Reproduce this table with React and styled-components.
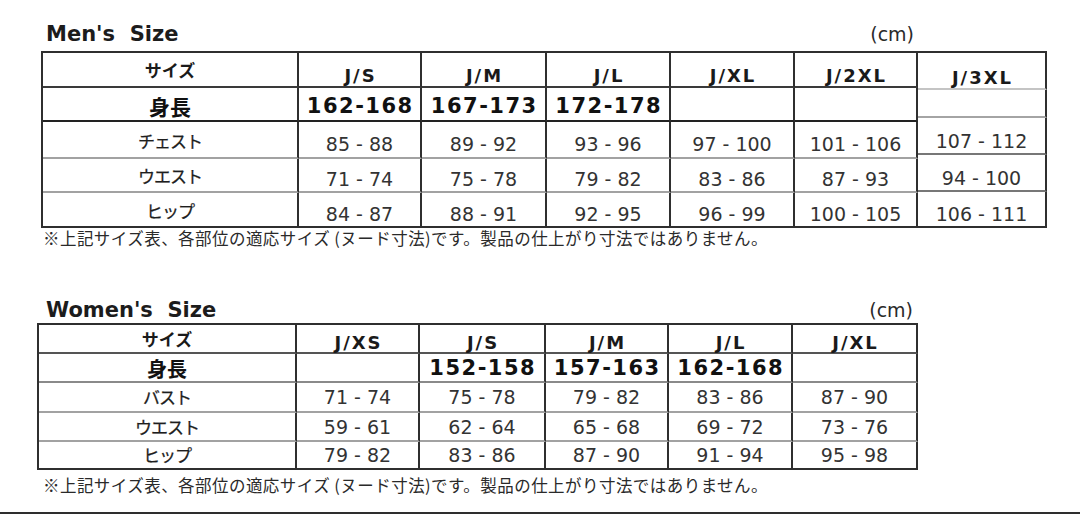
import React from 'react';
import styled, { createGlobalStyle } from 'styled-components';

const JP = `"Noto Sans CJK JP", "Noto Sans", sans-serif`;
const LAT = `"DejaVu Sans", "Noto Sans CJK JP", sans-serif`;
const DARK = '#2f2f2f';
const GRAY = '#a2a2a2';

const GlobalStyle = createGlobalStyle`
  html, body { margin: 0; padding: 0; background: #fff; }
  body { font-family: ${LAT}; color: #222; }
`;

const Page = styled.div`
  width: 1080px;
  height: 514px;
  box-sizing: border-box;
  padding-top: 21px;
  display: flex;
  flex-direction: column;
  overflow: hidden;
`;

const Section = styled.section`
  display: flex;
  flex-direction: column;
  margin-top: ${p => p.$top}px;
  margin-left: ${p => p.$left}px;
`;

const Header = styled.div`
  width: ${p => p.$width}px;
  height: 27px;
  display: flex;
  justify-content: space-between;
  align-items: baseline;
`;

const Title = styled.h2`
  margin: 0;
  padding-left: ${p => p.$indent}px;
  font: bold 21px/27px ${LAT};
  color: #1c1c1c;
  white-space: pre;
`;

const Unit = styled.span`
  font: 19px/27px ${LAT};
  color: #2a2a2a;
`;

const Tables = styled.div`
  display: flex;
  margin-top: ${p => p.$gap}px;
`;

const Grid = styled.div`
  display: grid;
  grid-template-columns: ${p => p.$cols};
  grid-template-rows: ${p => p.$rows};
  border-top: 2px solid ${DARK};
  border-left: ${p => (p.$edge ? `2px solid ${DARK}` : 'none')};
`;

const Cell = styled.div`
  box-sizing: border-box;
  display: flex;
  align-items: center;
  justify-content: center;
  white-space: nowrap;
  border-right: 2px solid ${DARK};
  border-bottom: 2px solid ${p => p.$line || DARK};
  padding: ${p => ((p.$dy || 0) > 0 ? p.$dy * 2 : 0)}px 0 ${p => ((p.$dy || 0) < 0 ? -p.$dy * 2 : 0)}px;
`;

const LabelHead = styled(Cell)`
  font: bold 17px ${JP};
  color: #1a1a1a;
`;

const SizeHead = styled(Cell)`
  font: bold 18px ${LAT};
  letter-spacing: 2px;
  padding-left: 2px;
  color: #1a1a1a;
`;

const HeightLabel = styled(Cell)`
  font: bold ${p => p.$size}px ${JP};
  color: #111;
`;

const HeightValue = styled(Cell)`
  font: bold 21px ${LAT};
  letter-spacing: 1.5px;
  padding-left: 1.5px;
  color: #111;
`;

const PartLabel = styled(Cell)`
  font: 17px ${JP};
  letter-spacing: -1px;
  color: #1e1e1e;
  -webkit-text-stroke: 0.25px #1e1e1e;
`;

const Value = styled(Cell)`
  font: 19px ${LAT};
  color: #333;
`;

const Note = styled.p`
  margin: ${p => p.$gap}px 0 0 ${p => p.$indent}px;
  font: 16.5px/22px ${JP};
  letter-spacing: 0.45px;
  color: #2a2a2a;
  white-space: nowrap;
`;

const BottomBar = styled.div`
  margin-top: auto;
  height: 2px;
  background: #2e2e2e;
`;

const NOTE = '※上記サイズ表、各部位の適応サイズ (ヌード寸法)です。製品の仕上がり寸法ではありません。';

const men = {
  sizes: ['J/S', 'J/M', 'J/L', 'J/XL', 'J/2XL'],
  heights: ['162-168', '167-173', '172-178', '', ''],
  rows: [
    ['チェスト', ['85 - 88', '89 - 92', '93 - 96', '97 - 100', '101 - 106']],
    ['ウエスト', ['71 - 74', '75 - 78', '79 - 82', '83 - 86', '87 - 93']],
    ['ヒップ', ['84 - 87', '88 - 91', '92 - 95', '96 - 99', '100 - 105']],
  ],
  cols: '256px 123px 125px 124px 124px 123px',
  rowH: '35px 34px 37px 34px 35px',
  lines: ['#3a3a3a', '#222', GRAY, GRAY, DARK],
  dy: { head: 5.5, height: 1.5, label: 0.5, value: 4 },
  heightSize: 21,
};

const women = {
  sizes: ['J/XS', 'J/S', 'J/M', 'J/L', 'J/XL'],
  heights: ['', '152-158', '157-163', '162-168', ''],
  rows: [
    ['バスト', ['71 - 74', '75 - 78', '79 - 82', '83 - 86', '87 - 90']],
    ['ウエスト', ['59 - 61', '62 - 64', '65 - 68', '69 - 72', '73 - 76']],
    ['ヒップ', ['79 - 82', '83 - 86', '87 - 90', '91 - 94', '95 - 98']],
  ],
  cols: '258px 123px 126px 123px 124px 125px',
  rowH: '29px 29px 30px 29px 28px',
  lines: ['#555', '#8a8a8a', GRAY, GRAY, DARK],
  dy: { head: 3.5, height: 0.5, label: -0.5, value: 0 },
  heightSize: 20,
};

const extra = {
  size: 'J/3XL',
  values: ['107 - 112', '94 - 100', '106 - 111'],
  lines: ['#c4c4c4', '#a4a4a4', '#777', '#777', DARK],
};

function SizeGrid({ t }) {
  return (
    <Grid $edge $cols={t.cols} $rows={t.rowH}>
      <LabelHead $line={t.lines[0]}>サイズ</LabelHead>
      {t.sizes.map(s => (
        <SizeHead key={s} $line={t.lines[0]} $dy={t.dy.head}>{s}</SizeHead>
      ))}
      <HeightLabel $line={t.lines[1]} $dy={t.dy.height} $size={t.heightSize}>身長</HeightLabel>
      {t.heights.map((h, i) => (
        <HeightValue key={i} $line={t.lines[1]} $dy={t.dy.height}>{h}</HeightValue>
      ))}
      {t.rows.map(([label, vals], r) => (
        <React.Fragment key={label}>
          <PartLabel $line={t.lines[r + 2]} $dy={t.dy.label}>{label}</PartLabel>
          {vals.map((v, i) => (
            <Value key={i} $line={t.lines[r + 2]} $dy={t.dy.value}>{v}</Value>
          ))}
        </React.Fragment>
      ))}
    </Grid>
  );
}

function ExtraColumn() {
  return (
    <Grid $cols="129px" $rows="37px 28px 37px 37px 36px">
      <SizeHead $line={extra.lines[0]} $dy={7}>{extra.size}</SizeHead>
      <HeightValue $line={extra.lines[1]} />
      {extra.values.map((v, i) => (
        <Value key={v} $line={extra.lines[i + 2]} $dy={5}>{v}</Value>
      ))}
    </Grid>
  );
}

export default function App() {
  return (
    <>
      <GlobalStyle />
      <Page>
        <Section $top={0} $left={41}>
          <Header $width={873}>
            <Title $indent={5}>{"Men's  Size"}</Title>
            <Unit>(cm)</Unit>
          </Header>
          <Tables $gap={3}>
            <SizeGrid t={men} />
            <ExtraColumn />
          </Tables>
          <Note $gap={-1} $indent={2}>{NOTE}</Note>
        </Section>
        <Section $top={48} $left={37}>
          <Header $width={876}>
            <Title $indent={9}>{"Women's  Size"}</Title>
            <Unit>(cm)</Unit>
          </Header>
          <Tables $gap={-1}>
            <SizeGrid t={women} />
          </Tables>
          <Note $gap={3.5} $indent={6}>{NOTE}</Note>
        </Section>
        <BottomBar />
      </Page>
    </>
  );
}
